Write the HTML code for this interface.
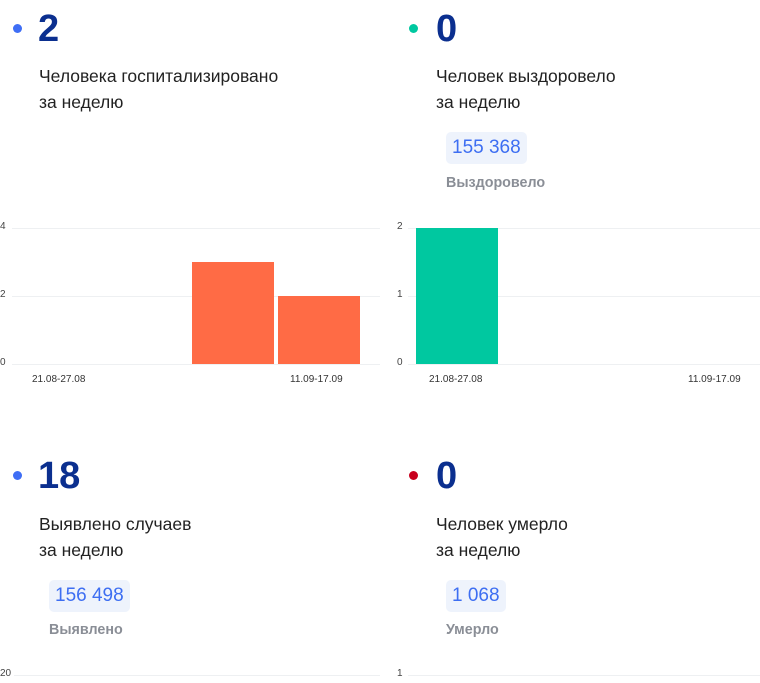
<!DOCTYPE html>
<html><head><meta charset="utf-8"><style>
body{margin:0;width:760px;height:683px;background:#fff;position:relative;overflow:hidden;font-family:"Liberation Sans",sans-serif}
.dot{position:absolute;width:9px;height:9px;border-radius:50%}
.num{position:absolute;font-size:38px;font-weight:bold;color:#0b2f8f;line-height:1}
.t{position:absolute;font-size:17.5px;color:#222;line-height:26px;white-space:nowrap}
.pill{position:absolute;height:32px;background:#eef3fc;border-radius:5px;color:#3d6ef2;font-size:19px;line-height:32px;padding:0 6px;white-space:nowrap}
.sub{position:absolute;font-size:14.3px;color:#8a8e96;font-weight:bold}
.g{position:absolute;height:1px;background:#eef0f2}
.y{position:absolute;font-size:10px;color:#444}
.x{position:absolute;font-size:10px;color:#333}
.bar{position:absolute}
</style></head><body>
<div class="dot" style="left:13px;top:24px;background:#3f6ef5"></div>
<div class="num" style="left:38px;top:10px">2</div>
<div class="t" style="left:39px;top:63px">Человека госпитализировано<br>за неделю</div>

<div class="dot" style="left:409px;top:24px;background:#00c8a0"></div>
<div class="num" style="left:436px;top:10px">0</div>
<div class="t" style="left:436px;top:63px">Человек выздоровело<br>за неделю</div>
<div class="pill" style="left:446px;top:132px">155 368</div>
<div class="sub" style="left:446px;top:175px">Выздоровело</div>

<div class="g" style="left:12px;width:368px;top:228px"></div>
<div class="g" style="left:12px;width:368px;top:296px"></div>
<div class="g" style="left:12px;width:368px;top:364px"></div>
<div class="y" style="left:0;top:221px">4</div>
<div class="y" style="left:0;top:289px">2</div>
<div class="y" style="left:0;top:357px">0</div>
<div class="bar" style="left:192px;width:82px;top:262px;height:102px;background:#ff6b45"></div>
<div class="bar" style="left:278px;width:82px;top:296px;height:68px;background:#ff6b45"></div>
<div class="x" style="left:32px;top:374px">21.08-27.08</div>
<div class="x" style="left:290px;top:374px">11.09-17.09</div>

<div class="g" style="left:408px;width:352px;top:228px"></div>
<div class="g" style="left:408px;width:352px;top:296px"></div>
<div class="g" style="left:408px;width:352px;top:364px"></div>
<div class="y" style="left:397px;top:221px">2</div>
<div class="y" style="left:397px;top:289px">1</div>
<div class="y" style="left:397px;top:357px">0</div>
<div class="bar" style="left:416px;width:82px;top:228px;height:136px;background:#00c8a0"></div>
<div class="x" style="left:429px;top:374px">21.08-27.08</div>
<div class="x" style="left:688px;top:374px">11.09-17.09</div>

<div class="dot" style="left:13px;top:471px;background:#3f6ef5"></div>
<div class="num" style="left:38px;top:457px">18</div>
<div class="t" style="left:39px;top:511px">Выявлено случаев<br>за неделю</div>
<div class="pill" style="left:49px;top:580px">156 498</div>
<div class="sub" style="left:49px;top:622px">Выявлено</div>

<div class="dot" style="left:409px;top:471px;background:#c8001e"></div>
<div class="num" style="left:436px;top:457px">0</div>
<div class="t" style="left:436px;top:511px">Человек умерло<br>за неделю</div>
<div class="pill" style="left:446px;top:580px">1 068</div>
<div class="sub" style="left:446px;top:622px">Умерло</div>

<div class="g" style="left:14px;width:366px;top:675px"></div>
<div class="g" style="left:408px;width:352px;top:675px"></div>
<div class="y" style="left:0;top:668px">20</div>
<div class="y" style="left:397px;top:668px">1</div>
</body></html>
